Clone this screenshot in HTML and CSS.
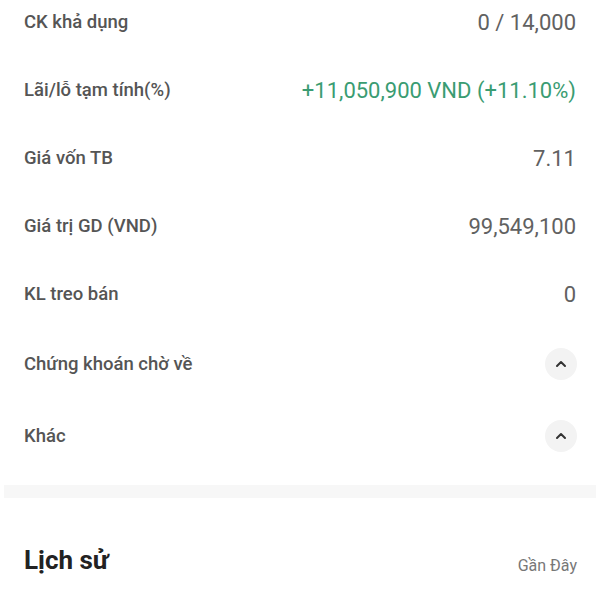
FILE: index.html
```html
<!DOCTYPE html>
<html lang="vi">
<head>
<meta charset="utf-8">
<link rel="stylesheet" href="styles.css">
</head>
<body>
<div class="list">
  <div class="row"><span class="label">CK khả dụng</span><span class="value">0 / 14,000</span></div>
  <div class="row"><span class="label">Lãi/lỗ tạm tính(%)</span><span class="value green">+11,050,900 VND (+11.10%)</span></div>
  <div class="row"><span class="label">Giá vốn TB</span><span class="value">7.11</span></div>
  <div class="row"><span class="label">Giá trị GD (VND)</span><span class="value">99,549,100</span></div>
  <div class="row"><span class="label">KL treo bán</span><span class="value">0</span></div>
  <div class="row tall"><span class="label">Chứng khoán chờ về</span><span class="toggle"><svg width="16" height="16" viewBox="0 0 16 16"><path d="M4 10 L8 6 L12 10" fill="none" stroke="#333" stroke-width="2" stroke-linecap="round" stroke-linejoin="round"/></svg></span></div>
  <div class="row tall"><span class="label">Khác</span><span class="toggle"><svg width="16" height="16" viewBox="0 0 16 16"><path d="M4 10 L8 6 L12 10" fill="none" stroke="#333" stroke-width="2" stroke-linecap="round" stroke-linejoin="round"/></svg></span></div>
</div>
<div class="band"></div>
<div class="history">
  <span class="title">Lịch sử</span>
  <span class="filter">Gần Đây</span>
</div>
</body>
</html>
```
FILE: styles.css
```css
html, body {
  margin: 0;
  padding: 0;
  background: #ffffff;
  font-family: Roboto, "Noto Sans", sans-serif;
  overflow: hidden;
}
.list {
  margin-top: -12px;
  padding: 0 24px;
}
.row {
  height: 68px;
  display: flex;
  align-items: center;
  justify-content: space-between;
}
.row.tall {
  height: 72px;
}
.label {
  font-size: 18.5px;
  font-weight: 500;
  color: #555555;
}
.value {
  font-size: 22px;
  color: #616161;
}
.value.green {
  color: #3a9c72;
}
.toggle {
  width: 32px;
  height: 32px;
  border-radius: 50%;
  background: #f3f3f3;
  display: flex;
  align-items: center;
  justify-content: center;
  margin-right: -1px;
}
.band {
  margin: 13px 4px 0;
  height: 13px;
  background: #f7f7f7;
}
.history {
  display: flex;
  justify-content: space-between;
  align-items: center;
  padding: 46px 23px 0 24px;
}
.title {
  font-size: 26px;
  font-weight: 700;
  color: #222222;
}
.filter {
  font-size: 16px;
  color: #777777;
  margin-top: 12px;
}
```
